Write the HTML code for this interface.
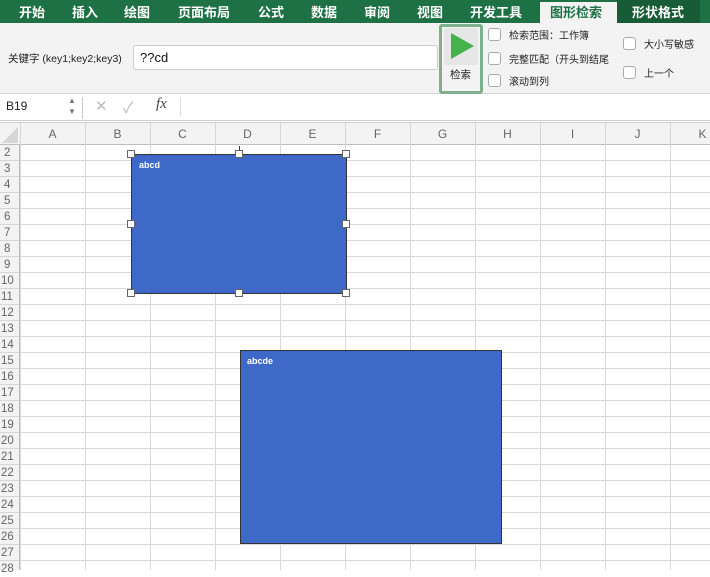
<!DOCTYPE html><html><head><meta charset="utf-8"><style>
*{margin:0;padding:0;box-sizing:border-box}
body{width:710px;height:570px;overflow:hidden;background:#fff;font-family:"Liberation Sans","Noto Sans CJK SC",sans-serif;position:relative}
.a{position:absolute}
.tabs{left:0;top:0;width:710px;height:23px;background:#1e7145}
.tab{position:absolute;top:2px;color:#fff;font-size:13px;font-weight:bold}
.rib{left:0;top:23px;width:710px;height:71px;background:#f3f3f3;border-bottom:1px solid #d6d6d6}
.cb{position:absolute;width:13px;height:13px;border:1px solid #aaa;border-radius:3px;background:#fff}
.lbl{position:absolute;font-size:10px;color:#222}
.fb{left:0;top:94px;width:710px;height:27px;background:#fff;border-bottom:1px solid #d0d0d0}
.hdr{left:0;top:122px;width:710px;height:23px;background:#f3f3f3;border-bottom:1px solid #bdbdbd;border-top:1px solid #d0d0d0}
.col{position:absolute;top:4px;font-size:12px;color:#666;width:65px;text-align:center}
.grid{left:20px;top:145px;width:690px;height:425px;background-image:linear-gradient(to right,#d9d9d9 1px,transparent 1px),linear-gradient(to bottom,#d9d9d9 1px,transparent 1px);background-size:65px 16px;background-position:0 -1px}
.rh{left:0;top:145px;width:20px;height:425px;background:#f3f3f3;border-right:1px solid #bdbdbd}
.rn{position:absolute;left:0;width:19px;text-align:left;padding-left:4px;font-size:11.5px;color:#666;height:16px;line-height:16px}
.shape{position:absolute;background:#3f69c9;border:1px solid #333;color:#fff;font-size:9px;font-weight:bold}
.h{position:absolute;width:8px;height:8px;background:#fff;border:1px solid #666}
</style></head><body>
<div class="a tabs">
<span class="tab" style="left:19px">开始</span>
<span class="tab" style="left:72px">插入</span>
<span class="tab" style="left:124px">绘图</span>
<span class="tab" style="left:178px">页面布局</span>
<span class="tab" style="left:258px">公式</span>
<span class="tab" style="left:311px">数据</span>
<span class="tab" style="left:364px">审阅</span>
<span class="tab" style="left:417px">视图</span>
<span class="tab" style="left:470px">开发工具</span>
<div class="a" style="left:540px;top:2px;width:77px;height:21px;background:#f3f3f3"></div>
<span class="tab" style="left:550px;color:#1e7145">图形检索</span>
<div class="a" style="left:617px;top:0;width:83px;height:23px;background:#175c37"></div>
<span class="tab" style="left:632px">形状格式</span>
</div>
<div class="a rib">
<span class="lbl" style="left:8px;top:28px;font-size:10.5px">关键字 (key1;key2;key3)</span>
<div class="a" style="left:133px;top:22px;width:305px;height:25px;background:#fff;border:1px solid #ccc;border-radius:3px;font-size:13px;padding:4px 0 0 6px;color:#111">??cd</div>
<div class="a" style="left:439px;top:1px;width:44px;height:70px;border:3px solid #7fb08d;border-radius:3px;background:#f3f3f3"></div>
<div class="a" style="left:444px;top:5px;width:34px;height:37px;background:#e6e6e6;border-radius:2px"></div>
<svg class="a" style="left:448px;top:9px" width="28" height="28"><polygon points="3,1 26,14 3,27" fill="#43b34b"/></svg>
<span class="lbl" style="left:450px;top:44px;font-size:10.5px">检索</span>
<div class="cb" style="left:488px;top:5px"></div><span class="lbl" style="left:509px;top:4px">检索范围：工作簿</span>
<div class="cb" style="left:488px;top:29px"></div><span class="lbl" style="left:509px;top:28px">完整匹配（开头到结尾</span>
<div class="cb" style="left:488px;top:51px"></div><span class="lbl" style="left:509px;top:50px">滚动到列</span>
<div class="cb" style="left:623px;top:14px"></div><span class="lbl" style="left:644px;top:13px">大小写敏感</span>
<div class="cb" style="left:623px;top:43px"></div><span class="lbl" style="left:644px;top:42px">上一个</span>
</div>
<div class="a fb">
<span class="a" style="left:6px;top:5px;font-size:12px;color:#222">B19</span>
<span class="a" style="left:68px;top:1px;font-size:8px;color:#777;line-height:11px">▲<br>▼</span>
<div class="a" style="left:82px;top:3px;width:1px;height:22px;background:#ccc"></div>
<span class="a" style="left:95px;top:3px;font-size:15px;color:#bbb">✕</span>
<span class="a" style="left:123px;top:3px;font-size:15px;color:#bbb">✓</span>
<span class="a" style="left:156px;top:2px;font-size:15px;font-style:italic;font-family:'Liberation Serif',serif;color:#444">fx</span>
<div class="a" style="left:180px;top:4px;width:1px;height:18px;background:#ddd"></div>
</div>
<div class="a hdr">
<svg class="a" style="left:2px;top:4px" width="16" height="16"><polygon points="16,0 16,16 0,16" fill="#d6d6d6"/></svg>
<span class="col" style="left:20px">A</span><span class="col" style="left:85px">B</span><span class="col" style="left:150px">C</span><span class="col" style="left:215px">D</span><span class="col" style="left:280px">E</span><span class="col" style="left:345px">F</span><span class="col" style="left:410px">G</span><span class="col" style="left:475px">H</span><span class="col" style="left:540px">I</span><span class="col" style="left:605px">J</span><span class="col" style="left:670px">K</span>
<div style="position:absolute;top:0;left:20px;width:690px;height:22px;background-image:linear-gradient(to right,#d6d6d6 1px,transparent 1px);background-size:65px 22px"></div>
</div>
<div class="a grid"></div>
<div class="a rh">
<div class="rn" style="top:0">2</div><div class="rn" style="top:16px">3</div><div class="rn" style="top:32px">4</div><div class="rn" style="top:48px">5</div><div class="rn" style="top:64px">6</div><div class="rn" style="top:80px">7</div><div class="rn" style="top:96px">8</div><div class="rn" style="top:112px">9</div><div class="rn" style="top:128px;padding-left:1px">10</div><div class="rn" style="top:144px;padding-left:1px">11</div><div class="rn" style="top:160px;padding-left:1px">12</div><div class="rn" style="top:176px;padding-left:1px">13</div><div class="rn" style="top:192px;padding-left:1px">14</div><div class="rn" style="top:208px;padding-left:1px">15</div><div class="rn" style="top:224px;padding-left:1px">16</div><div class="rn" style="top:240px;padding-left:1px">17</div><div class="rn" style="top:256px;padding-left:1px">18</div><div class="rn" style="top:272px;padding-left:1px">19</div><div class="rn" style="top:288px;padding-left:1px">20</div><div class="rn" style="top:304px;padding-left:1px">21</div><div class="rn" style="top:320px;padding-left:1px">22</div><div class="rn" style="top:336px;padding-left:1px">23</div><div class="rn" style="top:352px;padding-left:1px">24</div><div class="rn" style="top:368px;padding-left:1px">25</div><div class="rn" style="top:384px;padding-left:1px">26</div><div class="rn" style="top:400px;padding-left:1px">27</div><div class="rn" style="top:416px;padding-left:1px">28</div>
<div style="position:absolute;left:0;top:0;width:19px;height:425px;background-image:linear-gradient(to bottom,#d6d6d6 1px,transparent 1px);background-size:19px 16px;background-position:0 -1px"></div>
</div>
<div class="a" style="left:239px;top:146px;width:1px;height:9px;background:#333"></div>
<div class="shape" style="left:131px;top:154px;width:216px;height:140px;padding:5px 0 0 7px">abcd</div>
<div class="h" style="left:127px;top:150px"></div><div class="h" style="left:235px;top:150px"></div><div class="h" style="left:342px;top:150px"></div>
<div class="h" style="left:127px;top:220px"></div><div class="h" style="left:342px;top:220px"></div>
<div class="h" style="left:127px;top:289px"></div><div class="h" style="left:235px;top:289px"></div><div class="h" style="left:342px;top:289px"></div>
<div class="shape" style="left:240px;top:350px;width:262px;height:194px;padding:5px 0 0 6px">abcde</div>
</body></html>
